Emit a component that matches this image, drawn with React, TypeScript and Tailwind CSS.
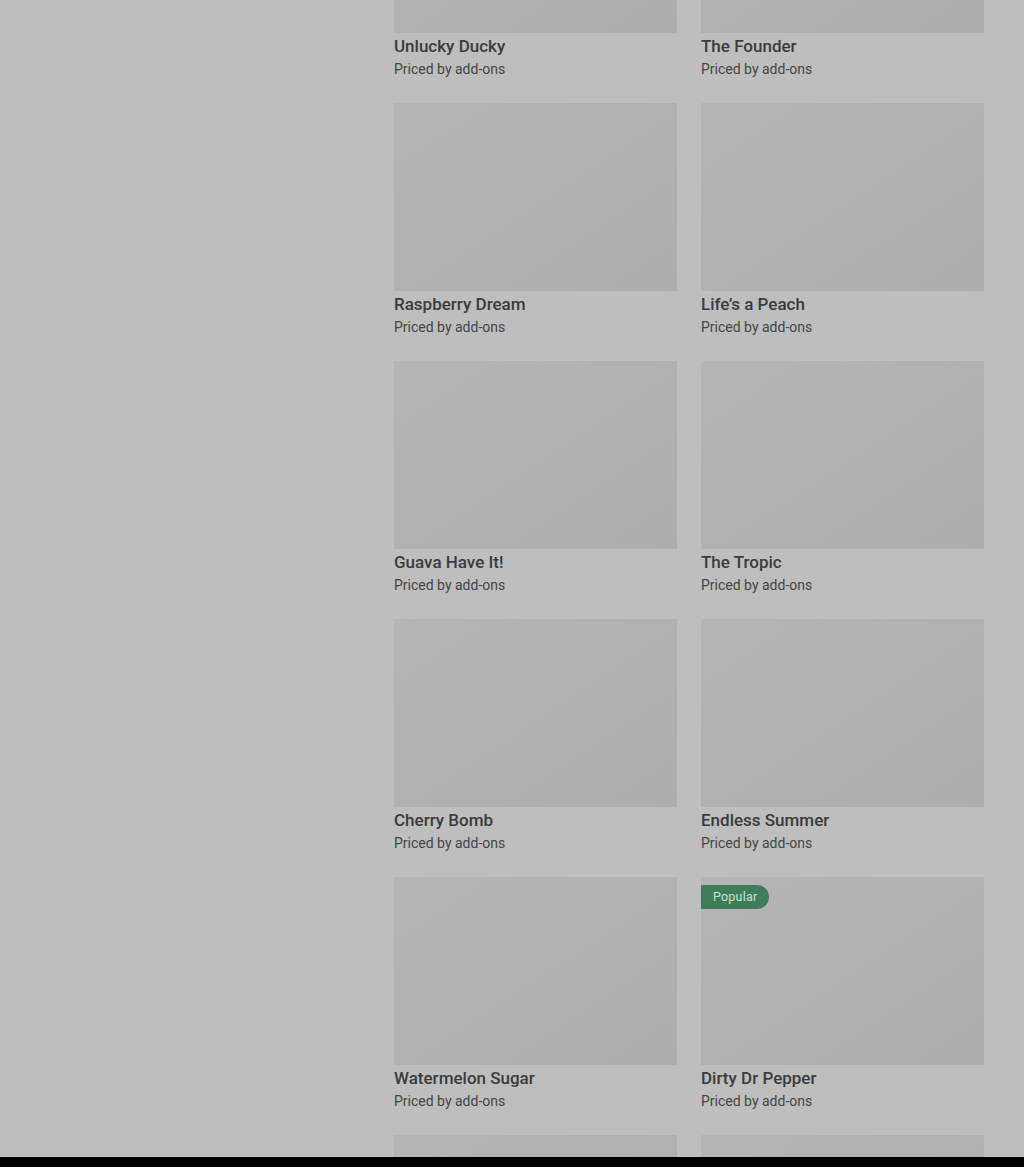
const items = [
  { name: "Unlucky Ducky" },
  { name: "The Founder" },
  { name: "Raspberry Dream" },
  { name: "Life’s a Peach" },
  { name: "Guava Have It!" },
  { name: "The Tropic" },
  { name: "Cherry Bomb" },
  { name: "Endless Summer" },
  { name: "Watermelon Sugar" },
  { name: "Dirty Dr Pepper", popular: true },
  { name: "", loading: true },
  { name: "", loading: true },
];

export default function App() {
  return (
    <div
      className="h-[1167px] w-full flex flex-col overflow-hidden bg-[#bebebe]"
      style={{ fontFamily: "Roboto, 'Liberation Sans', sans-serif" }}
    >
      <main className="flex-1 overflow-hidden flex">
        <aside className="w-[394px] shrink-0" />
        <div className="w-[590px] -mt-[155px] grid grid-cols-2 gap-x-6 gap-y-6 content-start">
          {items.map((item, i) => (
            <div key={i} className="flex flex-col">
              <div className="relative h-[188px] bg-gradient-to-br from-[#b5b5b5] to-[#adadad]">
                {item.popular && (
                  <span className="absolute left-0 top-2 h-6 pl-3 pr-3 flex items-center rounded-r-full bg-[#3d7d5b] text-[12.5px] tracking-[0.2px] text-[#cfe0d6]">
                    Popular
                  </span>
                )}
              </div>
              {!item.loading && (
                <>
                  <h3 className="mt-px text-[17px] leading-6 font-medium text-[#3b3b3b]">{item.name}</h3>
                  <p className="mt-px text-[14px] leading-5 text-[#454545]">Priced by add-ons</p>
                </>
              )}
            </div>
          ))}
        </div>
      </main>
      <div className="h-[10px] bg-black shrink-0" />
    </div>
  );
}
